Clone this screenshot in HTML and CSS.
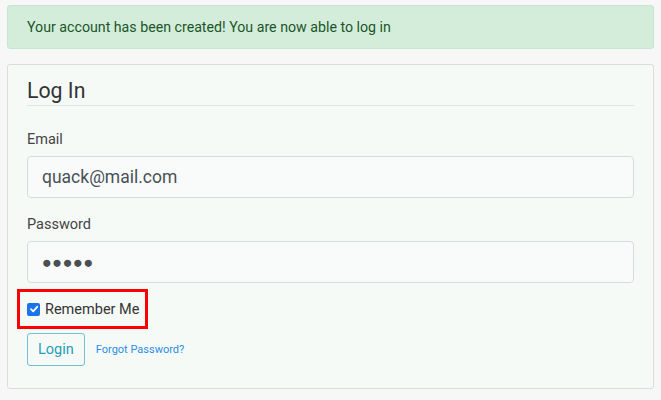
FILE: index.html
```html
<!DOCTYPE html>
<html>
<head>
<meta charset="utf-8">
<link rel="stylesheet" href="styles.css">
</head>
<body>
<div class="page">
  <div class="alert">Your account has been created! You are now able to log in</div>
  <div class="card">
    <form class="form">
      <div class="legend">Log In</div>
      <div class="group">
        <label class="label">Email</label>
        <div class="input">quack@mail.com</div>
      </div>
      <div class="group">
        <label class="label">Password</label>
        <div class="input dots">●●●●●</div>
      </div>
      <div class="check-row">
        <span class="checkbox"><svg width="10" height="10" viewBox="0 0 10 10"><path d="M2 5.2 L4.2 7.4 L8.2 2.8" fill="none" stroke="#fff" stroke-width="1.8" stroke-linecap="round" stroke-linejoin="round"/></svg></span>
        <span class="check-label">Remember Me</span>
      </div>
      <div class="actions">
        <span class="btn">Login</span>
        <a class="link">Forgot Password?</a>
      </div>
    </form>
  </div>
</div>
</body>
</html>
```
FILE: styles.css
```css
html, body { margin: 0; padding: 0; }
body {
  background: #f7f7f7;
  font-family: Roboto, "Liberation Sans", sans-serif;
  color: #333;
}
.page {
  padding: 5px 7px 0 7px;
  display: flex;
  flex-direction: column;
}
.alert {
  height: 44px;
  box-sizing: border-box;
  background: #d4eddb;
  border: 1px solid #c6e6cf;
  border-radius: 3px;
  color: #1b5529;
  font-size: 14.2px;
  padding: 0 19px;
  display: flex;
  align-items: center;
}
.card {
  margin-top: 15px;
  height: 325px;
  box-sizing: border-box;
  background: #f6faf7;
  border: 1px solid #dcdcdc;
  border-radius: 3px;
  padding: 12px 19px 0 19px;
}
.form { display: flex; flex-direction: column; }
.legend {
  font-size: 21.3px;
  color: #333;
  padding-bottom: 0;
  border-bottom: 1px solid #e1e5e2;
  line-height: 28px;
  margin-bottom: 7px;
}
.group { display: flex; flex-direction: column; }
.label {
  font-size: 14.5px;
  color: #444;
  margin-top: 17px;
  line-height: 20px;
  margin-bottom: 6px;
}
.input {
  height: 42px;
  box-sizing: border-box;
  border: 1px solid #d5dcdf;
  border-radius: 4px;
  background: #f8fbf9;
  font-size: 17.5px;
  color: #495057;
  padding: 0 14px;
  display: flex;
  align-items: center;
}
.dots { font-size: 16.5px; letter-spacing: 0.4px; color: #4a4f54; }
.check-row {
  position: relative;
  margin-top: 6px;
  height: 40px;
  display: flex;
  align-items: center;
  gap: 5px;
}
.check-row::before {
  content: "";
  position: absolute;
  left: -10px;
  top: 0;
  width: 131px;
  height: 40px;
  box-sizing: border-box;
  border: 3px solid #f00;
}
.checkbox {
  width: 13px; height: 13px;
  background: #1a73e8;
  border-radius: 2px;
  display: flex; align-items: center; justify-content: center;
}
.check-label { font-size: 14.5px; color: #333; }
.actions {
  margin-top: 4px;
  display: flex;
  align-items: center;
  gap: 11px;
}
.btn {
  height: 33px;
  box-sizing: border-box;
  border: 1px solid #6fc3cf;
  border-radius: 3px;
  color: #1f9fb5;
  font-size: 14.5px;
  padding: 0 10px;
  display: flex; align-items: center;
}
.link { font-size: 11px; color: #2a8de6; }
```
